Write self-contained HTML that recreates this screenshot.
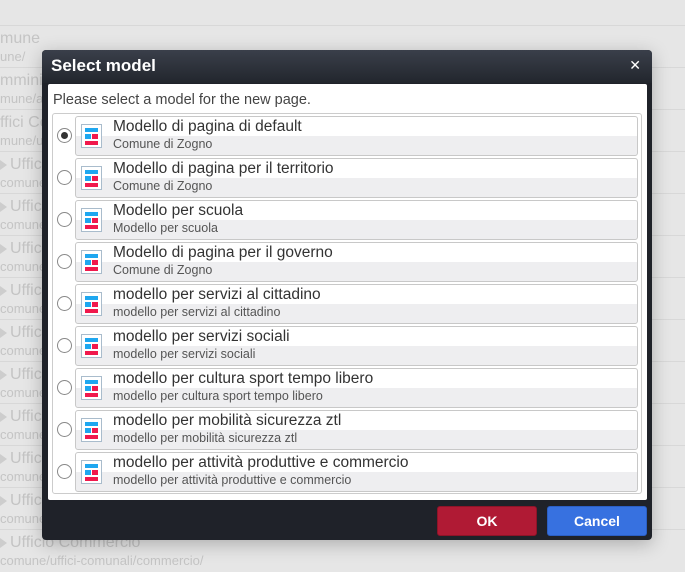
<!DOCTYPE html>
<html><head><meta charset="utf-8"><style>
*{margin:0;padding:0;box-sizing:border-box}
body{width:685px;height:572px;overflow:hidden;background:#e6e6e6;font-family:"Liberation Sans","DejaVu Sans",sans-serif;position:relative}
.bg{position:absolute;left:0;width:685px;height:42px;border-top:1px solid #d8d8d8;color:#c4c4c4}
.bg .t{position:absolute;left:10px;top:4px;font-size:16px}
.bg .p{position:absolute;left:0;top:23px;font-size:13px}
.bg .a{position:absolute;left:0;top:8px;width:0;height:0;border-left:7px solid #cdcdcd;border-top:5px solid transparent;border-bottom:5px solid transparent}
.dlg{position:absolute;left:42px;top:50px;width:610px;height:490px;background:#1f2229;border-radius:4px;box-shadow:0 4px 18px rgba(0,0,0,.25)}
.hd{height:33px;background:linear-gradient(#3a3f4a,#22262d);border-radius:4px 4px 0 0;color:#fff;font-weight:bold;font-size:17px;padding:6px 0 0 9px}
.x{position:absolute;right:11px;top:7px;color:#fff;font-size:14px;font-weight:bold}
.ct{position:absolute;left:6px;top:34px;width:599px;height:416px;background:#fff;border-radius:2px}
.msg{position:absolute;left:5px;top:8px;font-size:14.5px;color:#444}
.list{position:absolute;left:4px;top:29px;width:590px;height:381px;border:1px solid #ccc;border-radius:3px}
.row{position:absolute;left:0;height:42px;width:588px}
.rad{position:absolute;left:4px;top:14px;width:15px;height:15px;border:1px solid #888;border-radius:50%;background:#fff}
.rad.on::after{content:"";position:absolute;left:3px;top:3px;width:7px;height:7px;border-radius:50%;background:#333}
.it{position:absolute;left:22px;top:2px;width:563px;height:40px;border:1px solid #c8c8c8;border-radius:3px;background:linear-gradient(#fff 0,#fff 50%,#eeeef0 50%,#eeeef0 100%)}
.ic{position:absolute;left:5px;top:7px;width:21px;height:24px;border:1px solid #a9bccc;background:#fff}
.ic i{position:absolute;display:block}
.tt{position:absolute;left:37px;top:1px;font-size:15.5px;color:#333}
.st{position:absolute;left:37px;top:20px;font-size:12.5px;color:#555}
.btn{position:absolute;top:456px;height:30px;width:100px;border-radius:3px;color:#fff;font-weight:bold;font-size:14px;text-align:center;line-height:29px}
</style></head><body>
<div class="bg" style="top:-17px"></div>
<div class="bg" style="top:25px"><span class="t" style="left:0">mune</span><span class="p">une/</span></div>
<div class="bg" style="top:67px"><span class="t" style="left:0">mminis</span><span class="p">mune/am</span></div>
<div class="bg" style="top:109px"><span class="t" style="left:0">ffici Co</span><span class="p">mune/uff</span></div>
<div class="bg" style="top:151px"><span class="a"></span><span class="t">Ufficio</span><span class="p">comune/</span></div>
<div class="bg" style="top:193px"><span class="a"></span><span class="t">Ufficio</span><span class="p">comune/</span></div>
<div class="bg" style="top:235px"><span class="a"></span><span class="t">Ufficio</span><span class="p">comune/</span></div>
<div class="bg" style="top:277px"><span class="a"></span><span class="t">Ufficio</span><span class="p">comune/</span></div>
<div class="bg" style="top:319px"><span class="a"></span><span class="t">Ufficio</span><span class="p">comune/</span></div>
<div class="bg" style="top:361px"><span class="a"></span><span class="t">Ufficio</span><span class="p">comune/</span></div>
<div class="bg" style="top:403px"><span class="a"></span><span class="t">Ufficio</span><span class="p">comune/</span></div>
<div class="bg" style="top:445px"><span class="a"></span><span class="t">Ufficio</span><span class="p">comune/</span></div>
<div class="bg" style="top:487px"><span class="a"></span><span class="t">Ufficio</span><span class="p">comune/</span></div>
<div class="bg" style="top:529px"><span class="a"></span><span class="t">Ufficio Commercio</span><span class="p">comune/uffici-comunali/commercio/</span></div>

<div class="dlg">
<div class="hd">Select model</div><div class="x">✕</div>
<div class="ct">
<div class="msg">Please select a model for the new page.</div>
<div class="list">
<div class="row" style="top:0"><div class="rad on"></div><div class="it"><div class="ic"><i style="left:3px;top:3px;width:13px;height:4px;background:#1ea7f0"></i><i style="left:3px;top:9px;width:6px;height:5px;background:#1ea7f0"></i><i style="left:10px;top:9px;width:6px;height:5px;background:#f0194d"></i><i style="left:3px;top:16px;width:13px;height:4px;background:#f0194d"></i></div><div class="tt">Modello di pagina di default</div><div class="st">Comune di Zogno</div></div></div>
<div class="row" style="top:42px"><div class="rad"></div><div class="it"><div class="ic"><i style="left:3px;top:3px;width:13px;height:4px;background:#1ea7f0"></i><i style="left:3px;top:9px;width:6px;height:5px;background:#1ea7f0"></i><i style="left:10px;top:9px;width:6px;height:5px;background:#f0194d"></i><i style="left:3px;top:16px;width:13px;height:4px;background:#f0194d"></i></div><div class="tt">Modello di pagina per il territorio</div><div class="st">Comune di Zogno</div></div></div>
<div class="row" style="top:84px"><div class="rad"></div><div class="it"><div class="ic"><i style="left:3px;top:3px;width:13px;height:4px;background:#1ea7f0"></i><i style="left:3px;top:9px;width:6px;height:5px;background:#1ea7f0"></i><i style="left:10px;top:9px;width:6px;height:5px;background:#f0194d"></i><i style="left:3px;top:16px;width:13px;height:4px;background:#f0194d"></i></div><div class="tt">Modello per scuola</div><div class="st">Modello per scuola</div></div></div>
<div class="row" style="top:126px"><div class="rad"></div><div class="it"><div class="ic"><i style="left:3px;top:3px;width:13px;height:4px;background:#1ea7f0"></i><i style="left:3px;top:9px;width:6px;height:5px;background:#1ea7f0"></i><i style="left:10px;top:9px;width:6px;height:5px;background:#f0194d"></i><i style="left:3px;top:16px;width:13px;height:4px;background:#f0194d"></i></div><div class="tt">Modello di pagina per il governo</div><div class="st">Comune di Zogno</div></div></div>
<div class="row" style="top:168px"><div class="rad"></div><div class="it"><div class="ic"><i style="left:3px;top:3px;width:13px;height:4px;background:#1ea7f0"></i><i style="left:3px;top:9px;width:6px;height:5px;background:#1ea7f0"></i><i style="left:10px;top:9px;width:6px;height:5px;background:#f0194d"></i><i style="left:3px;top:16px;width:13px;height:4px;background:#f0194d"></i></div><div class="tt">modello per servizi al cittadino</div><div class="st">modello per servizi al cittadino</div></div></div>
<div class="row" style="top:210px"><div class="rad"></div><div class="it"><div class="ic"><i style="left:3px;top:3px;width:13px;height:4px;background:#1ea7f0"></i><i style="left:3px;top:9px;width:6px;height:5px;background:#1ea7f0"></i><i style="left:10px;top:9px;width:6px;height:5px;background:#f0194d"></i><i style="left:3px;top:16px;width:13px;height:4px;background:#f0194d"></i></div><div class="tt">modello per servizi sociali</div><div class="st">modello per servizi sociali</div></div></div>
<div class="row" style="top:252px"><div class="rad"></div><div class="it"><div class="ic"><i style="left:3px;top:3px;width:13px;height:4px;background:#1ea7f0"></i><i style="left:3px;top:9px;width:6px;height:5px;background:#1ea7f0"></i><i style="left:10px;top:9px;width:6px;height:5px;background:#f0194d"></i><i style="left:3px;top:16px;width:13px;height:4px;background:#f0194d"></i></div><div class="tt">modello per cultura sport tempo libero</div><div class="st">modello per cultura sport tempo libero</div></div></div>
<div class="row" style="top:294px"><div class="rad"></div><div class="it"><div class="ic"><i style="left:3px;top:3px;width:13px;height:4px;background:#1ea7f0"></i><i style="left:3px;top:9px;width:6px;height:5px;background:#1ea7f0"></i><i style="left:10px;top:9px;width:6px;height:5px;background:#f0194d"></i><i style="left:3px;top:16px;width:13px;height:4px;background:#f0194d"></i></div><div class="tt">modello per mobilità sicurezza ztl</div><div class="st">modello per mobilità sicurezza ztl</div></div></div>
<div class="row" style="top:336px"><div class="rad"></div><div class="it"><div class="ic"><i style="left:3px;top:3px;width:13px;height:4px;background:#1ea7f0"></i><i style="left:3px;top:9px;width:6px;height:5px;background:#1ea7f0"></i><i style="left:10px;top:9px;width:6px;height:5px;background:#f0194d"></i><i style="left:3px;top:16px;width:13px;height:4px;background:#f0194d"></i></div><div class="tt">modello per attività produttive e commercio</div><div class="st">modello per attività produttive e commercio</div></div></div>
</div>
</div>
<div class="btn" style="left:395px;background:#b01a34;border:1px solid #8e1428">OK</div>
<div class="btn" style="left:505px;background:#3771e0;border:1px solid #2b5fc4">Cancel</div>
</div>
</body></html>
